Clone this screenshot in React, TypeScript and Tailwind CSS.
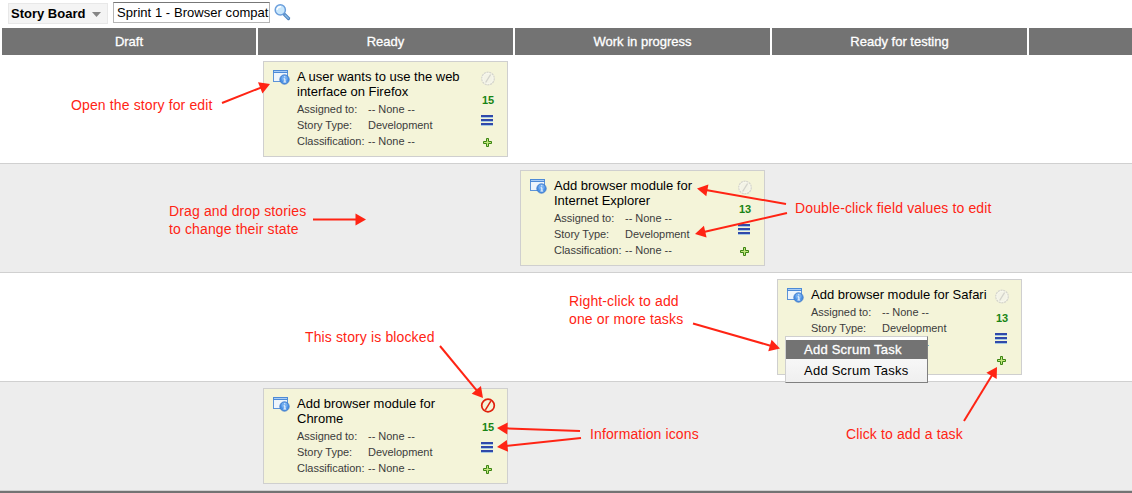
import React from "react";

type Story = {
  title: string[];
  points: number;
  column: number;
  blocked?: boolean;
  menu?: boolean;
};

const columns = ["Draft", "Ready", "Work in progress", "Ready for testing", ""];

const stories: Story[] = [
  { title: ["A user wants to use the web", "interface on Firefox"], points: 15, column: 1 },
  { title: ["Add browser module for", "Internet Explorer"], points: 13, column: 2 },
  { title: ["Add browser module for Safari"], points: 13, column: 3, menu: true },
  { title: ["Add browser module for", "Chrome"], points: 15, column: 1, blocked: true },
];

const offsets = ["", "ml-[263px]", "ml-[520px]", "ml-[777px]"];

function StoryIcon() {
  return (
    <svg width="18" height="17" viewBox="0 0 18 17" className="shrink-0">
      <rect x="0.5" y="1.5" width="14" height="11" fill="#eef5fc" stroke="#5c93d8" />
      <rect x="0" y="1" width="15" height="3" fill="#4d8ad6" />
      <rect x="1" y="2" width="13" height="1" fill="#a9cdf5" />
      <circle cx="11.5" cy="10.5" r="4.7" fill="#4a90e4" stroke="#3a73c4" strokeWidth="0.8" />
      <circle cx="11.5" cy="9.2" r="3" fill="#8cc0f7" opacity="0.6" />
      <path d="M10.6 9.8h1.3v3M10.4 13h2.8M11.2 7.8h1.1" stroke="#fff" strokeWidth="1" fill="none" />
    </svg>
  );
}

function BlockedIcon({ active }: { active?: boolean }) {
  return active ? (
    <svg width="16" height="16" viewBox="0 0 16 16">
      <circle cx="8" cy="8.5" r="6.3" fill="none" stroke="#e0200c" strokeWidth="1.7" />
      <path d="M10.8 4.1 5.4 12.9" stroke="#e0200c" strokeWidth="1.5" />
    </svg>
  ) : (
    <svg width="16" height="16" viewBox="0 0 16 16">
      <circle cx="8" cy="8.5" r="6.2" fill="#f3f3e6" stroke="#d6d6ce" strokeWidth="1.5" strokeDasharray="2 .7" />
      <circle cx="8" cy="8.5" r="5.2" fill="none" stroke="#fafaf2" strokeWidth="0.7" />
      <path d="M10.6 4.5 5.6 12.5" stroke="#d3d3cb" strokeWidth="1.4" />
    </svg>
  );
}

function LinesIcon() {
  return (
    <svg width="12" height="11" viewBox="0 0 12 11" shapeRendering="crispEdges">
      {[0, 4, 8].map((y) => (
        <g key={y}>
          <rect y={y} width="12" height="2" fill="#3049aa" />
          <rect y={y + 2} width="12" height="1" fill="#a5c9e2" />
        </g>
      ))}
    </svg>
  );
}

function PlusIcon() {
  return (
    <svg width="9" height="9" viewBox="0 0 9 9">
      <path d="M3.5.5h2v3h3v2h-3v3h-2v-3h-3v-2h3z" fill="#c2e67c" stroke="#3b8412" />
    </svg>
  );
}

function ContextMenu() {
  return (
    <div className="absolute top-[56px] left-[7px] h-[47px] w-[143px] border border-[#cfcfcf] border-r-[#808080] border-b-[#808080] bg-gradient-to-b from-white to-[#efefef] pt-[3px] text-[13px] tracking-[0.24px] text-black">
      <div className="h-[19px] bg-[#737373] pl-[18px] leading-[20px] text-white [-webkit-text-stroke:0.3px_white]">
        Add Scrum Task
      </div>
      <div className="h-[22px] pl-[18px] leading-[23px]">Add Scrum Tasks</div>
    </div>
  );
}

function StoryCard({ story }: { story: Story }) {
  const fields = [
    ["Assigned to:", "-- None --"],
    ["Story Type:", "Development"],
    ["Classification:", "-- None --"],
  ];
  return (
    <article
      className={`relative flex h-[96px] w-[245px] border border-[#cfcfcf] bg-[#f4f4d9] pt-[7px] pl-[9px] ${offsets[story.column]}`}
    >
      <StoryIcon />
      <div className="ml-[6px] w-[178px] whitespace-nowrap">
        <h3 className="mb-[2px] text-[13px] leading-[15px] text-black">
          {story.title.map((line) => (
            <span key={line} className="block">
              {line}
            </span>
          ))}
        </h3>
        {fields.map(([label, value]) => (
          <div key={label} className="flex h-4 text-[11px] leading-4 tracking-[-0.03px] text-[#3c3c3c]">
            <span className="w-[71px]">{label}</span>
            <span>{value}</span>
          </div>
        ))}
      </div>
      <div className="flex w-[26px] flex-col items-center pt-[1px]">
        <BlockedIcon active={story.blocked} />
        <b className="mt-[6px] mb-[7px] h-4 text-[11px] leading-4 text-[#198414]">{story.points}</b>
        <div className="mr-[2px]">
          <LinesIcon />
        </div>
        <div className="mt-[12px] mr-[1px]">
          <PlusIcon />
        </div>
      </div>
      {story.menu && <ContextMenu />}
    </article>
  );
}

const arrows = [
  [222, 103, 270, 84],
  [313, 219.5, 366, 219.5],
  [786, 204, 697, 188.5],
  [787, 213, 695, 234],
  [693, 323.5, 780, 348.5],
  [440, 346, 483, 398],
  [580, 431, 497, 428],
  [581, 438, 497, 447],
  [964, 421, 997, 367],
];

function Arrow({ points: [x1, y1, x2, y2] }: { points: number[] }) {
  const length = Math.hypot(x2 - x1, y2 - y1);
  const angle = (Math.atan2(y2 - y1, x2 - x1) * 180) / Math.PI;
  return (
    <g transform={`translate(${x1} ${y1}) rotate(${angle})`}>
      <path d={`M0 0H${length - 9}`} stroke="#ff2414" strokeWidth="2" />
      <path d={`M${length} 0l-10.5-6v12z`} fill="#ff2414" />
    </g>
  );
}

function Annotations() {
  return (
    <div className="pointer-events-none absolute inset-0 text-[14px] leading-[18px] tracking-[0.13px] whitespace-nowrap text-[#ff2414]">
      <svg width="1132" height="493" className="absolute inset-0">
        {arrows.map((points) => (
          <Arrow key={points.join()} points={points} />
        ))}
      </svg>
      <p className="absolute top-[96px] left-[71px]">Open the story for edit</p>
      <p className="absolute top-[202px] left-[169px]">
        Drag and drop stories
        <br />
        to change their state
      </p>
      <p className="absolute top-[199px] left-[795px]">Double-click field values to edit</p>
      <p className="absolute top-[292px] left-[569px]">
        Right-click to add
        <br />
        one or more tasks
      </p>
      <p className="absolute top-[328px] left-[305px]">This story is blocked</p>
      <p className="absolute top-[425px] left-[590px]">Information icons</p>
      <p className="absolute top-[425px] left-[846px]">Click to add a task</p>
    </div>
  );
}

export default function App() {
  return (
    <main className="relative h-[493px] w-[1132px] overflow-hidden bg-white font-['Liberation_Sans',Arial,sans-serif]">
      <div className="flex h-[28px] pl-2">
        <button className="mt-[3px] flex h-[21px] w-[100px] items-center border border-[#e8e8e8] bg-[#f4f4f4] pl-[2px] text-[13px] font-bold whitespace-nowrap text-black">
          Story Board
          <svg width="9" height="5" viewBox="0 0 9 5" className="mt-[2px] ml-[7px] shrink-0">
            <path d="M0 0h9L4.5 5z" fill="#858585" />
          </svg>
        </button>
        <div className="mt-[2px] ml-[5px] h-[21px] w-[157px] overflow-hidden border border-[#b5b5b5] border-t-[#777] pl-[3px] text-[13px] leading-[19px] tracking-[0.05px] whitespace-nowrap text-black">
          Sprint 1 - Browser compat
        </div>
        <svg width="17" height="17" viewBox="0 0 17 17" className="mt-[4px] ml-[4px]">
          <path d="m10.5 10.5 4 4" stroke="#4a80bc" strokeWidth="3.2" strokeLinecap="round" />
          <path d="m11 11 3.3 3.3" stroke="#8dbdea" strokeWidth="1.4" strokeLinecap="round" />
          <circle cx="6.3" cy="5.9" r="5.1" fill="#c9e7fc" stroke="#6c9fdc" strokeWidth="1.5" />
          <path d="M3 5.8a3.4 3.4 0 0 1 4-3" stroke="#fff" strokeWidth="1.5" fill="none" />
        </svg>
      </div>
      <header className="grid h-[27px] grid-cols-[254px_255px_255px_255px_103px] gap-[2px] pl-[2px]">
        {columns.map((name) => (
          <div
            key={name}
            className="bg-[#737373] text-center text-[13px] leading-[27px] text-white [-webkit-text-stroke:0.3px_white]"
          >
            {name}
          </div>
        ))}
      </header>
      {stories.map((story, i) => (
        <section key={i} className="h-[109px] border-b border-[#d0d0d0] bg-white pt-[6px] even:bg-[#ededed]">
          <StoryCard story={story} />
        </section>
      ))}
      <div className="h-[2px] bg-[#737373]" />
      <Annotations />
    </main>
  );
}
